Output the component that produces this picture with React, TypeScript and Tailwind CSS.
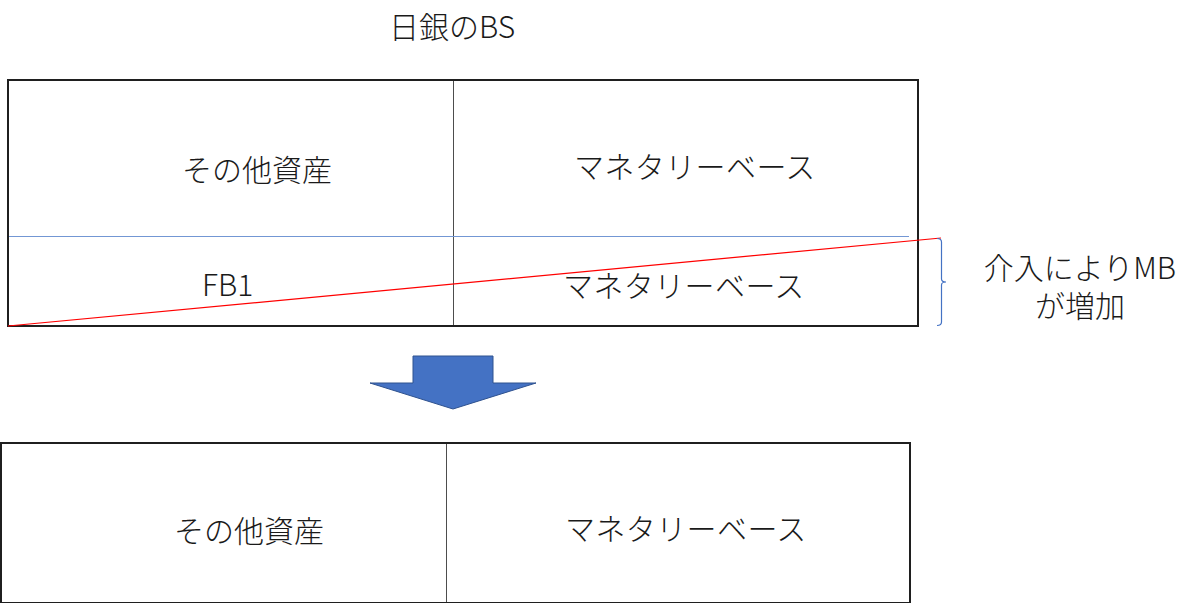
const FONT = "font-['Noto_Sans_CJK_JP','Noto_Sans',sans-serif] font-light";

// Overlay: intervention line + brace showing MB increase
function Overlay() {
  return (
    <svg className="absolute inset-0 pointer-events-none" width={1200} height={603} viewBox="0 0 1200 603">
      <line x1={8} y1={326} x2={941} y2={238} stroke="#ff0000" strokeWidth={1.2} />
      <path
        d="M937 238.5 Q941.5 238.5 941.5 242 L941.5 279 Q941.5 282 946 282 Q941.5 282 941.5 285 L941.5 322 Q941.5 325.5 937 325.5"
        fill="none"
        stroke="#4472c4"
        strokeWidth={1.2}
      />
    </svg>
  );
}

function DownArrow() {
  return (
    <svg width={170} height={56} viewBox="368 355 170 56" className="block ml-[368px] mt-[28px]">
      <polygon
        points="413,356 493,356 493,383 536,383 453,409 370,383 413,383"
        fill="#4472c4"
        stroke="#2f528f"
        strokeWidth={1}
      />
    </svg>
  );
}

export default function App() {
  return (
    <div className={`relative w-[1200px] h-[603px] bg-white text-[#1a1a1a] overflow-hidden ${FONT}`}>
      {/* Title */}
      <div className="pl-[389px] pt-[10px] text-[30px] leading-[30px]">日銀のBS</div>

      {/* Before intervention */}
      <div className="ml-[7px] mt-[39px] w-[912px] h-[248px] border-2 border-[#1f1f1f] grid grid-cols-[444px_1px_1fr] grid-rows-[155px_1px_1fr]">
        <div className="pl-[173px] pt-[72px] text-[30px] leading-[30px]">その他資産</div>
        <div className="bg-[#4d4d4d]" />
        <div className="pl-[120px] pt-[69px] text-[30px] leading-[30px] tracking-[0.4px]">マネタリーベース</div>
        <div className="col-span-3 bg-[#7397d4] mr-[8px]" />
        <div className="pl-[193px] pt-[31px] text-[30px] leading-[30px]">FB1</div>
        <div className="bg-[#4d4d4d]" />
        <div className="pl-[109px] pt-[32px] text-[30px] leading-[30px] tracking-[0.4px]">マネタリーベース</div>
      </div>

      <DownArrow />

      {/* After intervention */}
      <div className="mt-[31px] w-[911px] h-[162px] border-2 border-[#1f1f1f] grid grid-cols-[444px_1px_1fr]">
        <div className="pl-[172px] pt-[70px] text-[30px] leading-[30px]">その他資産</div>
        <div className="bg-[#4d4d4d]" />
        <div className="pl-[118px] pt-[68px] text-[30px] leading-[30px] tracking-[0.4px]">マネタリーベース</div>
      </div>

      <Overlay />

      <div className="absolute left-[970px] top-[251px] w-[220px] flex flex-col items-center gap-[8px] text-[30px] leading-[30px]">
        <div>介入によりMB</div>
        <div>が増加</div>
      </div>
    </div>
  );
}
